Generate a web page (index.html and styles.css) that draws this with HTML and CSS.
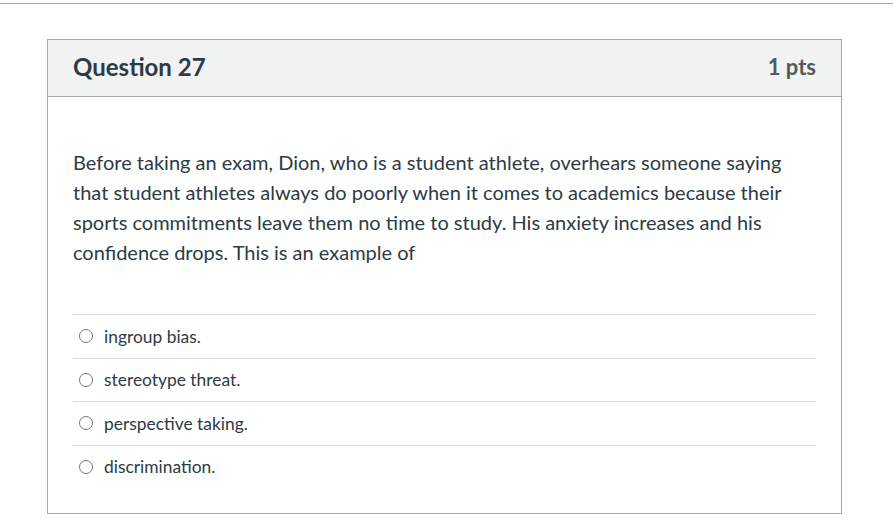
FILE: index.html
```html
<!DOCTYPE html>
<html>
<head>
<meta charset="utf-8">
<link rel="stylesheet" href="styles.css">
</head>
<body>
<div class="topline"></div>
<div class="card">
  <div class="card-header">
    <h2 class="title">Question 27</h2>
    <span class="pts">1 pts</span>
  </div>
  <div class="card-body">
    <p class="question">Before taking an exam, Dion, who is a student athlete, overhears someone saying that student athletes always do poorly when it comes to academics because their sports commitments leave them no time to study. His anxiety increases and his confidence drops. This is an example of</p>
    <div class="answers">
      <label class="answer"><span class="radio"></span><span>ingroup bias.</span></label>
      <label class="answer"><span class="radio"></span><span>stereotype threat.</span></label>
      <label class="answer"><span class="radio"></span><span>perspective taking.</span></label>
      <label class="answer"><span class="radio"></span><span>discrimination.</span></label>
    </div>
  </div>
</div>
</body>
</html>
```

FILE: styles.css
```css
html, body {
  margin: 0;
  padding: 0;
  background: #fff;
  font-family: Lato, "Liberation Sans", sans-serif;
  color: #2d3b45;
}
.topline {
  margin-top: 3px;
  border-top: 1px solid #a8a8a8;
}
.card {
  margin: 35px 0 0 47px;
  width: 793px;
  border: 1px solid #a9a9a9;
}
.card-header {
  height: 56px;
  background: #f1f2f2;
  border-bottom: 1px solid #a9a9a9;
  display: flex;
  align-items: center;
  justify-content: space-between;
  padding: 0 25px;
}
.title {
  margin: 0 0 4px;
  font-size: 24px;
  font-weight: 700;
  color: #2d3b45;
}
.pts {
  margin-bottom: 4px;
  font-size: 22px;
  font-weight: 700;
  color: #555a5e;
}
.card-body {
  padding: 50px 25px 25px;
}
.question {
  margin: 0 0 47px;
  font-size: 20px;
  line-height: 30px;
}
.answers {
  border-top: 1px solid #dcdcdc;
}
.answer {
  display: flex;
  align-items: center;
  height: 42.5px;
  border-bottom: 1px solid #dcdcdc;
  font-size: 17.4px;
  padding-left: 6px;
}
.answer:last-child {
  border-bottom: none;
}
.radio {
  width: 12px;
  height: 12px;
  border: 1.3px solid #73777b;
  border-radius: 50%;
  margin-right: 11px;
  flex: none;
}
```
